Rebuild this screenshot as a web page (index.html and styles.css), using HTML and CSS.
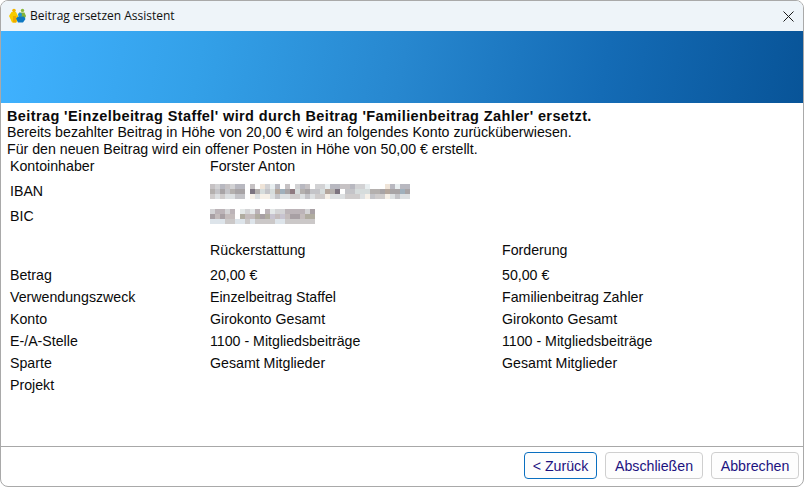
FILE: index.html
```html
<!DOCTYPE html>
<html lang="de">
<head>
<meta charset="utf-8">
<title>Beitrag ersetzen Assistent</title>
<link rel="stylesheet" href="styles.css">
</head>
<body>
<div class="window">
  <header class="titlebar">
    <svg class="app-icon" width="17" height="16" viewBox="0 0 17 16">
      <circle cx="5" cy="2.6" r="1.8" fill="#f2b400"/>
      <path d="M0 8 2.5 4h4.5L9 8v3l-1.5 3.5H3L1.5 11Z" fill="#f8cc00"/>
      <path d="M4 8h3v6.500H4Z" fill="#efaa00"/>
      <circle cx="13.500" cy="2.400" r="1.700" fill="#8dba3a"/>
      <path d="M10 4.500h5.500L17 8l-1 2H10Z" fill="#7fb33a"/>
      <circle cx="11" cy="6.800" r="2" fill="#1e90d4"/>
      <path d="M7 10.500 9 8.500h6l1.500 2.500L14 14.500H9Z" fill="#0e78c2"/>
    </svg>
    <span class="title-text">Beitrag ersetzen Assistent</span>
    <svg class="close-icon" width="11" height="11" viewBox="0 0 11 11">
      <path d="M.5.5l10 10M10.500.5l-10 10" stroke="#1a1a1a" stroke-width="1" fill="none"/>
    </svg>
  </header>
  <div class="banner"></div>
  <main class="content">
    <div class="intro">
      <p class="intro-bold">Beitrag 'Einzelbeitrag Staffel' wird durch Beitrag 'Familienbeitrag Zahler' ersetzt.</p>
      <p class="intro-line">Bereits bezahlter Beitrag in Höhe von 20,00 € wird an folgendes Konto zurücküberwiesen.</p>
      <p class="intro-line">Für den neuen Beitrag wird ein offener Posten in Höhe von 50,00 € erstellt.</p>
    </div>
    <div class="account">
      <div class="acc-row first"><span class="label">Kontoinhaber</span><span>Forster Anton</span></div>
      <div class="acc-row"><span class="label">IBAN</span>
        <svg class="blur" width="200" height="15" viewBox="0 0 40 3" shape-rendering="crispEdges">
          <path stroke="#c6c2c4" d="M0 .5h1M3 .5h1M8 .5h1M15 .5h1M19 .5h1M26 .5h2"/>
          <path stroke="#d2d2d4" d="M1 .5h1M4 .5h1M11 .5h1M17 .5h1M21 .5h2M29 .5h2"/>
          <path stroke="#b8b8c0" d="M2 .5h1M5 .5h2M13 .5h1M18 .5h1M24 .5h2M28 .5h1M36 .5h1M38 .5h2"/>
          <path stroke="#e8eef0" d="M12 .5h1M23 .5h1M31 .5h1M37 .5h1"/>
          <path stroke="#efe4d8" d="M10 .5h1M35 .5h1"/>
          <path stroke="#b4b0ae" d="M0 1.500h1M4 1.500h1M9 1.500h1M18 1.500h1M24 1.500h1M32 1.500h2"/>
          <path stroke="#c4c4c8" d="M1 1.500h1M3 1.500h1M11 1.500h1M16 1.500h1M20 1.500h2M27 1.500h2"/>
          <path stroke="#a8a4a6" d="M2 1.500h1M5 1.500h1M6 1.500h1M15 1.500h1M19 1.500h1M34 1.500h1M36 1.500h2M39 1.500h1"/>
          <path stroke="#7c7480" d="M8 1.500h1M25 1.500h1"/>
          <path stroke="#8e7a80" d="M16 1.500h1"/>
          <path stroke="#b4a69c" d="M13 1.500h1M23 1.500h1M35 1.500h1"/>
          <path stroke="#d6dcdc" d="M10 1.500h1M12 1.500h1M17 1.500h1M22 1.500h1M29 1.500h2M31 1.500h1"/>
          <path stroke="#a0b0bc" d="M14 1.500h1M38 1.500h1"/>
          <path stroke="#cfcccc" d="M0 2.500h1M2 2.500h1M16 2.500h2M21 2.500h2M27 2.500h3M33 2.500h2"/>
          <path stroke="#dde0e2" d="M1 2.500h1M3 2.500h2M9 2.500h1M12 2.500h1M14 2.500h2M18 2.500h1M20 2.500h1M24 2.500h3M30 2.500h1M36 2.500h1M38 2.500h2"/>
          <path stroke="#c4c4c8" d="M5 2.500h2M13 2.500h1M19 2.500h1M32 2.500h1M37 2.500h1"/>
          <path stroke="#f6f0e8" d="M8 2.500h1M10 2.500h2M23 2.500h1M31 2.500h1M35 2.500h1"/>
        </svg>
      </div>
      <div class="acc-row"><span class="label">BIC</span>
        <svg class="blur" width="105" height="15" viewBox="0 0 21 3" shape-rendering="crispEdges">
          <path stroke="#d4d4d6" d="M0 .5h1M3 .5h1M7 .5h1M13 .5h2M19 .5h1"/>
          <path stroke="#bcb4b8" d="M1 .5h1M2 .5h1M4 .5h1M9 .5h1M11 .5h1M15 .5h4"/>
          <path stroke="#e4e8e8" d="M6 .5h1M8 .5h1M12 .5h1"/>
          <path stroke="#a8a0a4" d="M0 1.500h1M2 1.500h1M10 1.500h1M20 .5h1M16 1.500h2"/>
          <path stroke="#c4bcbc" d="M1 1.500h1M3 1.500h2M7 1.500h2M13 1.500h1M15 1.500h1M18 1.500h1"/>
          <path stroke="#b0aca0" d="M6 1.500h1M9 1.500h1M11 1.500h1M19 1.500h2"/>
          <path stroke="#c8c4d0" d="M12 1.500h1M14 1.500h1"/>
          <path stroke="#dde4ea" d="M0 2.500h1M1 2.500h2M5 2.500h2M13 2.500h2M8 2.500h1"/>
          <path stroke="#cbc8c8" d="M3 2.500h2M7 2.500h1M9 2.500h4M15 2.500h6"/>
        </svg>
      </div>
    </div>
    <div class="details">
      <span class="head"></span><span class="head">Rückerstattung</span><span class="head">Forderung</span>
      <span class="label">Betrag</span><span>20,00 €</span><span>50,00 €</span>
      <span class="label">Verwendungszweck</span><span>Einzelbeitrag Staffel</span><span>Familienbeitrag Zahler</span>
      <span class="label">Konto</span><span>Girokonto Gesamt</span><span>Girokonto Gesamt</span>
      <span class="label">E-/A-Stelle</span><span>1100 - Mitgliedsbeiträge</span><span>1100 - Mitgliedsbeiträge</span>
      <span class="label">Sparte</span><span>Gesamt Mitglieder</span><span>Gesamt Mitglieder</span>
      <span class="label">Projekt</span><span></span><span></span>
    </div>
  </main>
  <footer class="footer">
    <button class="btn btn-default" type="button">&lt; Zurück</button>
    <button class="btn btn-finish" type="button">Abschließen</button>
    <button class="btn btn-cancel" type="button">Abbrechen</button>
  </footer>
</div>
</body>
</html>
```
FILE: styles.css
```css
* { box-sizing: border-box; }
html, body { margin: 0; height: 100%; background: #fff; }
body { font: 14.2px/16px "Liberation Sans", Arial, sans-serif; color: #0a0a0a; }
p { margin: 0; }

.window {
  height: 487px;
  display: flex;
  flex-direction: column;
  border: 1px solid #a9a9a9;
  border-radius: 8px;
  background: #fff;
  overflow: hidden;
}

.titlebar {
  height: 30px;
  flex: none;
  display: flex;
  align-items: center;
  padding: 0 9px 0 8px;
  background: #eef4f9;
}
.app-icon { flex: none; }
.title-text {
  margin-left: 4px;
  font: 12px/16px "Open Sans", sans-serif;
  color: #101010;
  flex: 1;
}
.close-icon { flex: none; }

.banner {
  height: 72px;
  flex: none;
  background: linear-gradient(100deg, #40b2ff 0%, #33a0e8 25%, #2787cf 50%, #146bb5 75%, #085498 100%);
}

.content { flex: 1; padding: 5px 0 0 6px; min-height: 0; }
.intro { display: flex; flex-direction: column; }
.intro-bold { font-weight: 700; font-size: 14.5px; letter-spacing: .39px; line-height: 16px; height: 16px; }
.intro-line { line-height: 17px; height: 17px; }

.account { padding-left: 3px; }
.acc-row {
  display: grid;
  grid-template-columns: 200px 1fr;
  height: 25px;
  align-items: start;
  line-height: 24px;
}
.acc-row.first { margin-top: -4px; }
.blur { display: block; align-self: center; }

.details {
  margin-top: 9px;
  padding-left: 3px;
  display: grid;
  grid-template-columns: 200px 292px 1fr;
  grid-template-rows: 26px;
  grid-auto-rows: 22px;
  align-items: start;
  line-height: 22px;
}
.head { line-height: 24px; }

.footer {
  flex: none;
  height: 40px;
  border-top: 1px solid #a8a8a8;
  display: flex;
  justify-content: flex-end;
  align-items: flex-start;
  gap: 8px;
  padding: 5px 4px 0 0;
}
.btn {
  height: 27px;
  padding: 0;
  font: 14.2px/16px "Liberation Sans", Arial, sans-serif;
  color: #1c1280;
  background: #fdfdfd;
  border: 1px solid #cfcfcf;
  border-radius: 4px;
}
.btn-default { width: 73px; border-color: #0a6fc0; }
.btn-finish { width: 98px; }
.btn-cancel { width: 88px; }
```
